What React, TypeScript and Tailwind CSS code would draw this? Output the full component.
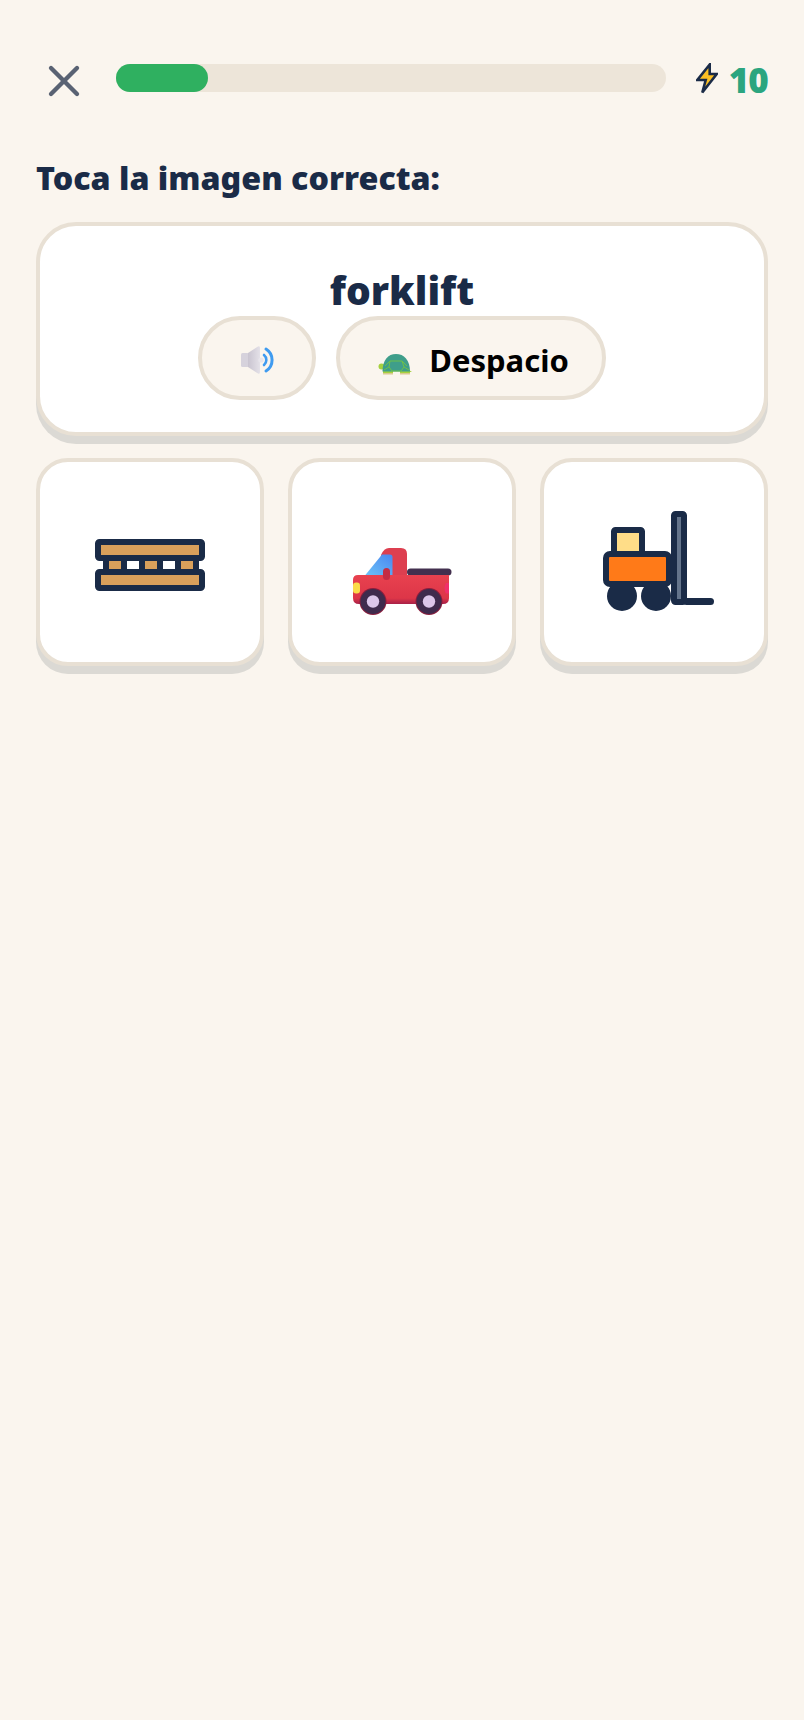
import {X} from 'lucide-react';

const SpeakerIcon = () => (
  <svg width="40" height="36" viewBox="12 12 40 36" fill="none">
    <defs>
      <linearGradient id="cone" x1="0" y1="0" x2="1" y2="0">
        <stop offset="0" stopColor="#c9c4d0" />
        <stop offset="1" stopColor="#e4e1e8" />
      </linearGradient>
    </defs>
    <rect x="16" y="23" width="8" height="14" rx="1.5" fill="#d6d2dc" />
    <path d="M23 23 L33 16.5 Q35 15.5 35 18 V42 Q35 44.5 33 43.5 L23 37 Z" fill="url(#cone)" />
    <circle cx="36" cy="30" r="2.6" fill="#e8e6ec" />
    <path d="M39 25 A6.5 6.5 0 0 1 39 35" stroke="#3f9bf0" strokeWidth="2.6" strokeLinecap="round" />
    <path d="M41 19 A13 13 0 0 1 41 41" stroke="#3f9bf0" strokeWidth="3" strokeLinecap="round" />
  </svg>
);

const TurtleIcon = () => (
  <svg width="36" height="26" viewBox="12 18 36 26" fill="none">
    <circle cx="16.5" cy="33.5" r="3" fill="#a6d13e" />
    <path d="M40 36 L47 38.5 L40 40.5 Z" fill="#a6d13e" />
    <rect x="18" y="37" width="10" height="4" rx="1" fill="#a6d13e" />
    <rect x="35" y="37" width="10" height="4" rx="1" fill="#a6d13e" />
    <rect x="18" y="40" width="10" height="1.5" fill="#d8c98e" />
    <rect x="35" y="40" width="10" height="1.5" fill="#d8c98e" />
    <path d="M17.5 38.5 C17.5 27 23 21 31 21 C39 21 45 27 45 38.5 Z" fill="#3f9e8a" />
    <path d="M25 28 H37 L39 34 L36 38 H27 L24 34 Z M25 28 L20 33 M37 28 L42 33 M24 34 L19 37 M39 34 L44 37" stroke="#6cc04a" strokeWidth="1" />
  </svg>
);

const PalletIcon = () => (
  <svg width="110" height="52" viewBox="0 0 110 52">
    <rect x="8" y="20" width="94" height="12" fill="#ffffff" />
    {[14, 50, 86].map((x) => (
      <rect key={x} x={x} y="20" width="12" height="12" fill="#d9a05b" />
    ))}
    {[8, 26, 44, 62, 80, 98].map((x) => (
      <rect key={x} x={x} y="20" width="6" height="12" fill="#1a2b47" />
    ))}
    <rect x="3" y="3" width="104" height="16" rx="1.5" fill="#d9a05b" stroke="#1a2b47" strokeWidth="6" />
    <rect x="3" y="33" width="104" height="16" rx="1.5" fill="#d9a05b" stroke="#1a2b47" strokeWidth="6" />
  </svg>
);

const TruckIcon = () => (
  <svg width="100" height="68" viewBox="11 17 100 68">
    <defs>
      <linearGradient id="body" x1="0" y1="0" x2="0" y2="1">
        <stop offset="0" stopColor="#e8414f" />
        <stop offset="0.8" stopColor="#dd3648" />
        <stop offset="1" stopColor="#a82048" />
      </linearGradient>
      <linearGradient id="glass" x1="0" y1="1" x2="1" y2="0">
        <stop offset="0" stopColor="#6cc4f7" />
        <stop offset="1" stopColor="#4a86f0" />
      </linearGradient>
    </defs>
    <rect x="66" y="38.5" width="44.5" height="7" rx="3.5" fill="#43304f" />
    <path d="M40 25 Q43 18 48 18 H60 Q66 18 66 24 V50 H38 Z" fill="#dd3f50" />
    <path d="M24 45.5 L41 24.5 H49 Q51.5 24.5 51.5 27 V46 Z" fill="url(#glass)" />
    <path d="M17 45 H108 V68 Q108 74 102 74 H18 Q12 74 12 68 V50 Q12 45 17 45 Z" fill="url(#body)" />
    <rect x="42" y="38" width="7" height="12" rx="3.5" fill="#c42c44" />
    <rect x="12" y="52.5" width="7" height="11" rx="3" fill="#fbdc4a" />
    <path d="M108 53 H105 Q102 58 105 63.5 H108 Z" fill="#f0306a" />
    <circle cx="32" cy="71.5" r="13.5" fill="#8a1f3e" />
    <circle cx="88" cy="71.5" r="13.5" fill="#8a1f3e" />
    <circle cx="32" cy="71.5" r="12.5" fill="#3f2b4d" />
    <circle cx="88" cy="71.5" r="12.5" fill="#3f2b4d" />
    <circle cx="32" cy="71.5" r="6.2" fill="#dcc6ea" />
    <circle cx="88" cy="71.5" r="6.2" fill="#dcc6ea" />
  </svg>
);

const ForkliftIcon = () => (
  <svg width="111" height="100" viewBox="603 511 111 100">
    <rect x="674" y="514" width="10" height="88" rx="1.5" fill="#64748b" stroke="#1a2b47" strokeWidth="6" />
    <rect x="683" y="598" width="31" height="7" rx="3.5" fill="#1a2b47" />
    <circle cx="622" cy="596" r="15" fill="#1a2b47" />
    <circle cx="656" cy="596" r="15" fill="#1a2b47" />
    <rect x="614" y="530" width="28" height="26" rx="1.5" fill="#ffdd88" stroke="#1a2b47" strokeWidth="6" />
    <rect x="606" y="554" width="63" height="30" rx="4" fill="#ff7a18" stroke="#1a2b47" strokeWidth="6" />
  </svg>
);

const BoltIcon = () => (
  <svg width="22" height="32" viewBox="17 13 22 32" fill="none">
    <path
      d="M30.7 14.5 L18.3 30 H26.7 L23.3 42.5 L37.7 24 H30.7 Z"
      fill="#fbbf24"
      stroke="#1a2b47"
      strokeWidth="2.6"
      strokeLinejoin="miter"
    />
  </svg>
);

const Option = ({children}: {children: React.ReactNode}) => (
  <button className="flex h-[208px] items-center justify-center rounded-[32px] border-4 border-[#e8e0d4] bg-white shadow-[0_8px_0_#dbd9d4]">
    {children}
  </button>
);

export default function App() {
  return (
    <div className="min-h-screen bg-[#faf5ee] px-9 pt-[50px] font-['Noto_Sans','Open_Sans',sans-serif]">
      <div className="flex items-center">
        <button className="flex h-14 w-14 items-center justify-center pt-[5px] text-[#596273]">
          <X size={52} strokeWidth={2} />
        </button>
        <div className="ml-6 h-7 flex-1 rounded-full bg-[#ede5d9]">
          <div className="h-full w-[92px] rounded-full bg-[#2fb060]" />
        </div>
        <div className="flex h-14 w-[102px] items-center justify-end gap-[11px] pt-[2px]">
          <BoltIcon />
          <span className="text-[35px] leading-none font-black tracking-tight text-[#2ba57f]">10</span>
        </div>
      </div>

      <h1 className="mt-[50px] text-[32.2px] leading-[44px] font-black text-[#1a2b47]">Toca la imagen correcta:</h1>

      <div className="mt-[22px] mb-[22px] h-[214px] rounded-[40px] border-4 border-[#e8e0d4] bg-white pt-[38px] shadow-[0_8px_0_#dbd9d4]">
        <p className="text-center text-[39px] leading-[52px] font-black text-[#1a2b47]">forklift</p>
        <div className="flex justify-center gap-5">
          <button className="flex h-[84px] w-[118px] items-center justify-center rounded-full border-4 border-[#e8e0d4] bg-[#faf5ee] pt-[3px]">
            <SpeakerIcon />
          </button>
          <button className="flex h-[84px] w-[270px] items-center justify-center gap-[16px] rounded-full border-4 border-[#e8e0d4] bg-[#faf5ee] pt-[4px] pl-[4px] text-[31px] font-bold text-black">
            <span className="mt-[8px]">
              <TurtleIcon />
            </span>
            Despacio
          </button>
        </div>
      </div>

      <div className="grid grid-cols-3 gap-6">
        <Option>
          <span className="mt-[6px]">
            <PalletIcon />
          </span>
        </Option>
        <Option>
          <span className="mt-[38px]">
            <TruckIcon />
          </span>
        </Option>
        <Option>
          <span className="mb-[2px] ml-[9px]">
            <ForkliftIcon />
          </span>
        </Option>
      </div>
    </div>
  );
}
